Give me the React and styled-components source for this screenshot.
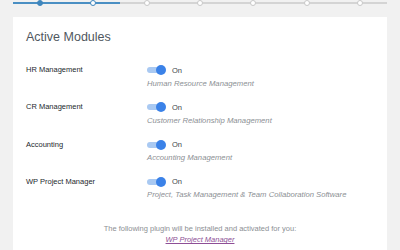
import React from "react";
import styled, { createGlobalStyle } from "styled-components";

const Global = createGlobalStyle`
  body {
    margin: 0;
    background: #f1f1f1;
    font-family: "Liberation Sans", Arial, sans-serif;
  }
`;

const Page = styled.div`
  padding: 0 13px;
  height: 250px;
  overflow: hidden;
`;

const Steps = styled.div`
  display: flex;
  height: 6px;
`;

const Step = styled.div`
  flex: 1;
  position: relative;
  display: flex;
  justify-content: center;

  &::before {
    content: "";
    position: absolute;
    left: 0;
    right: 0;
    top: 2px;
    height: 2px;
    background: ${(p) => (p.done ? "#4a8fc3" : "#d4d4d4")};
  }
`;

const Dot = styled.span`
  position: relative;
  box-sizing: border-box;
  width: 6px;
  height: 6px;
  border-radius: 50%;
  border: 1.5px solid ${(p) => (p.state === "todo" ? "#c8c8c8" : "#3f86bd")};
  background: ${(p) => (p.state === "done" ? "#3f86bd" : "#fff")};
`;

const Card = styled.div`
  margin-top: 11px;
  background: #fff;
  padding: 12px 13px 40px;
`;

const Title = styled.h2`
  margin: 0 0 20px;
  font-size: 12.5px;
  line-height: 16px;
  font-weight: 400;
  color: #50575e;
`;

const Row = styled.div`
  display: grid;
  grid-template-columns: 121px 1fr;
  margin-bottom: 13.8px;
`;

const Label = styled.div`
  font-size: 7.5px;
  line-height: 10px;
  color: #23282d;
`;

const ToggleLine = styled.div`
  display: flex;
  align-items: center;
  height: 10px;
  font-size: 7.5px;
  color: #3c434a;
`;

const Track = styled.span`
  position: relative;
  width: 19px;
  height: 10px;
  margin-right: 6px;

  &::before {
    content: "";
    position: absolute;
    left: 0;
    right: 4px;
    top: 2px;
    height: 6px;
    border-radius: 3px;
    background: #a9c9f2;
  }

  &::after {
    content: "";
    position: absolute;
    right: 0;
    top: 0;
    width: 10px;
    height: 10px;
    border-radius: 50%;
    background: #3b82e8;
  }
`;

const Desc = styled.div`
  margin-top: 3.5px;
  font-size: 7.7px;
  line-height: 10px;
  font-style: italic;
  color: #8c8f94;
`;

const Footer = styled.div`
  margin-top: 23px;
  text-align: center;
  font-size: 7.5px;
  line-height: 11px;
  color: #8c8f94;
`;

const PluginLink = styled.a`
  display: block;
  color: #8e4f96;
  font-style: italic;
  text-decoration: underline;
`;

const modules = [
  ["HR Management", "Human Resource Management"],
  ["CR Management", "Customer Relationship Management"],
  ["Accounting", "Accounting Management"],
  ["WP Project Manager", "Project, Task Management & Team Collaboration Software"],
];

const stepStates = ["done", "current", "todo", "todo", "todo", "todo", "todo"];

export default function App() {
  return (
    <Page>
      <Global />
      <Steps>
        {stepStates.map((s, i) => (
          <Step key={i} done={i < 2}>
            <Dot state={s} />
          </Step>
        ))}
      </Steps>
      <Card>
        <Title>Active Modules</Title>
        {modules.map(([name, desc]) => (
          <Row key={name}>
            <Label>{name}</Label>
            <div>
              <ToggleLine>
                <Track />
                On
              </ToggleLine>
              <Desc>{desc}</Desc>
            </div>
          </Row>
        ))}
        <Footer>
          The following plugin will be installed and activated for you:
          <PluginLink href="#">WP Project Manager</PluginLink>
        </Footer>
      </Card>
    </Page>
  );
}
